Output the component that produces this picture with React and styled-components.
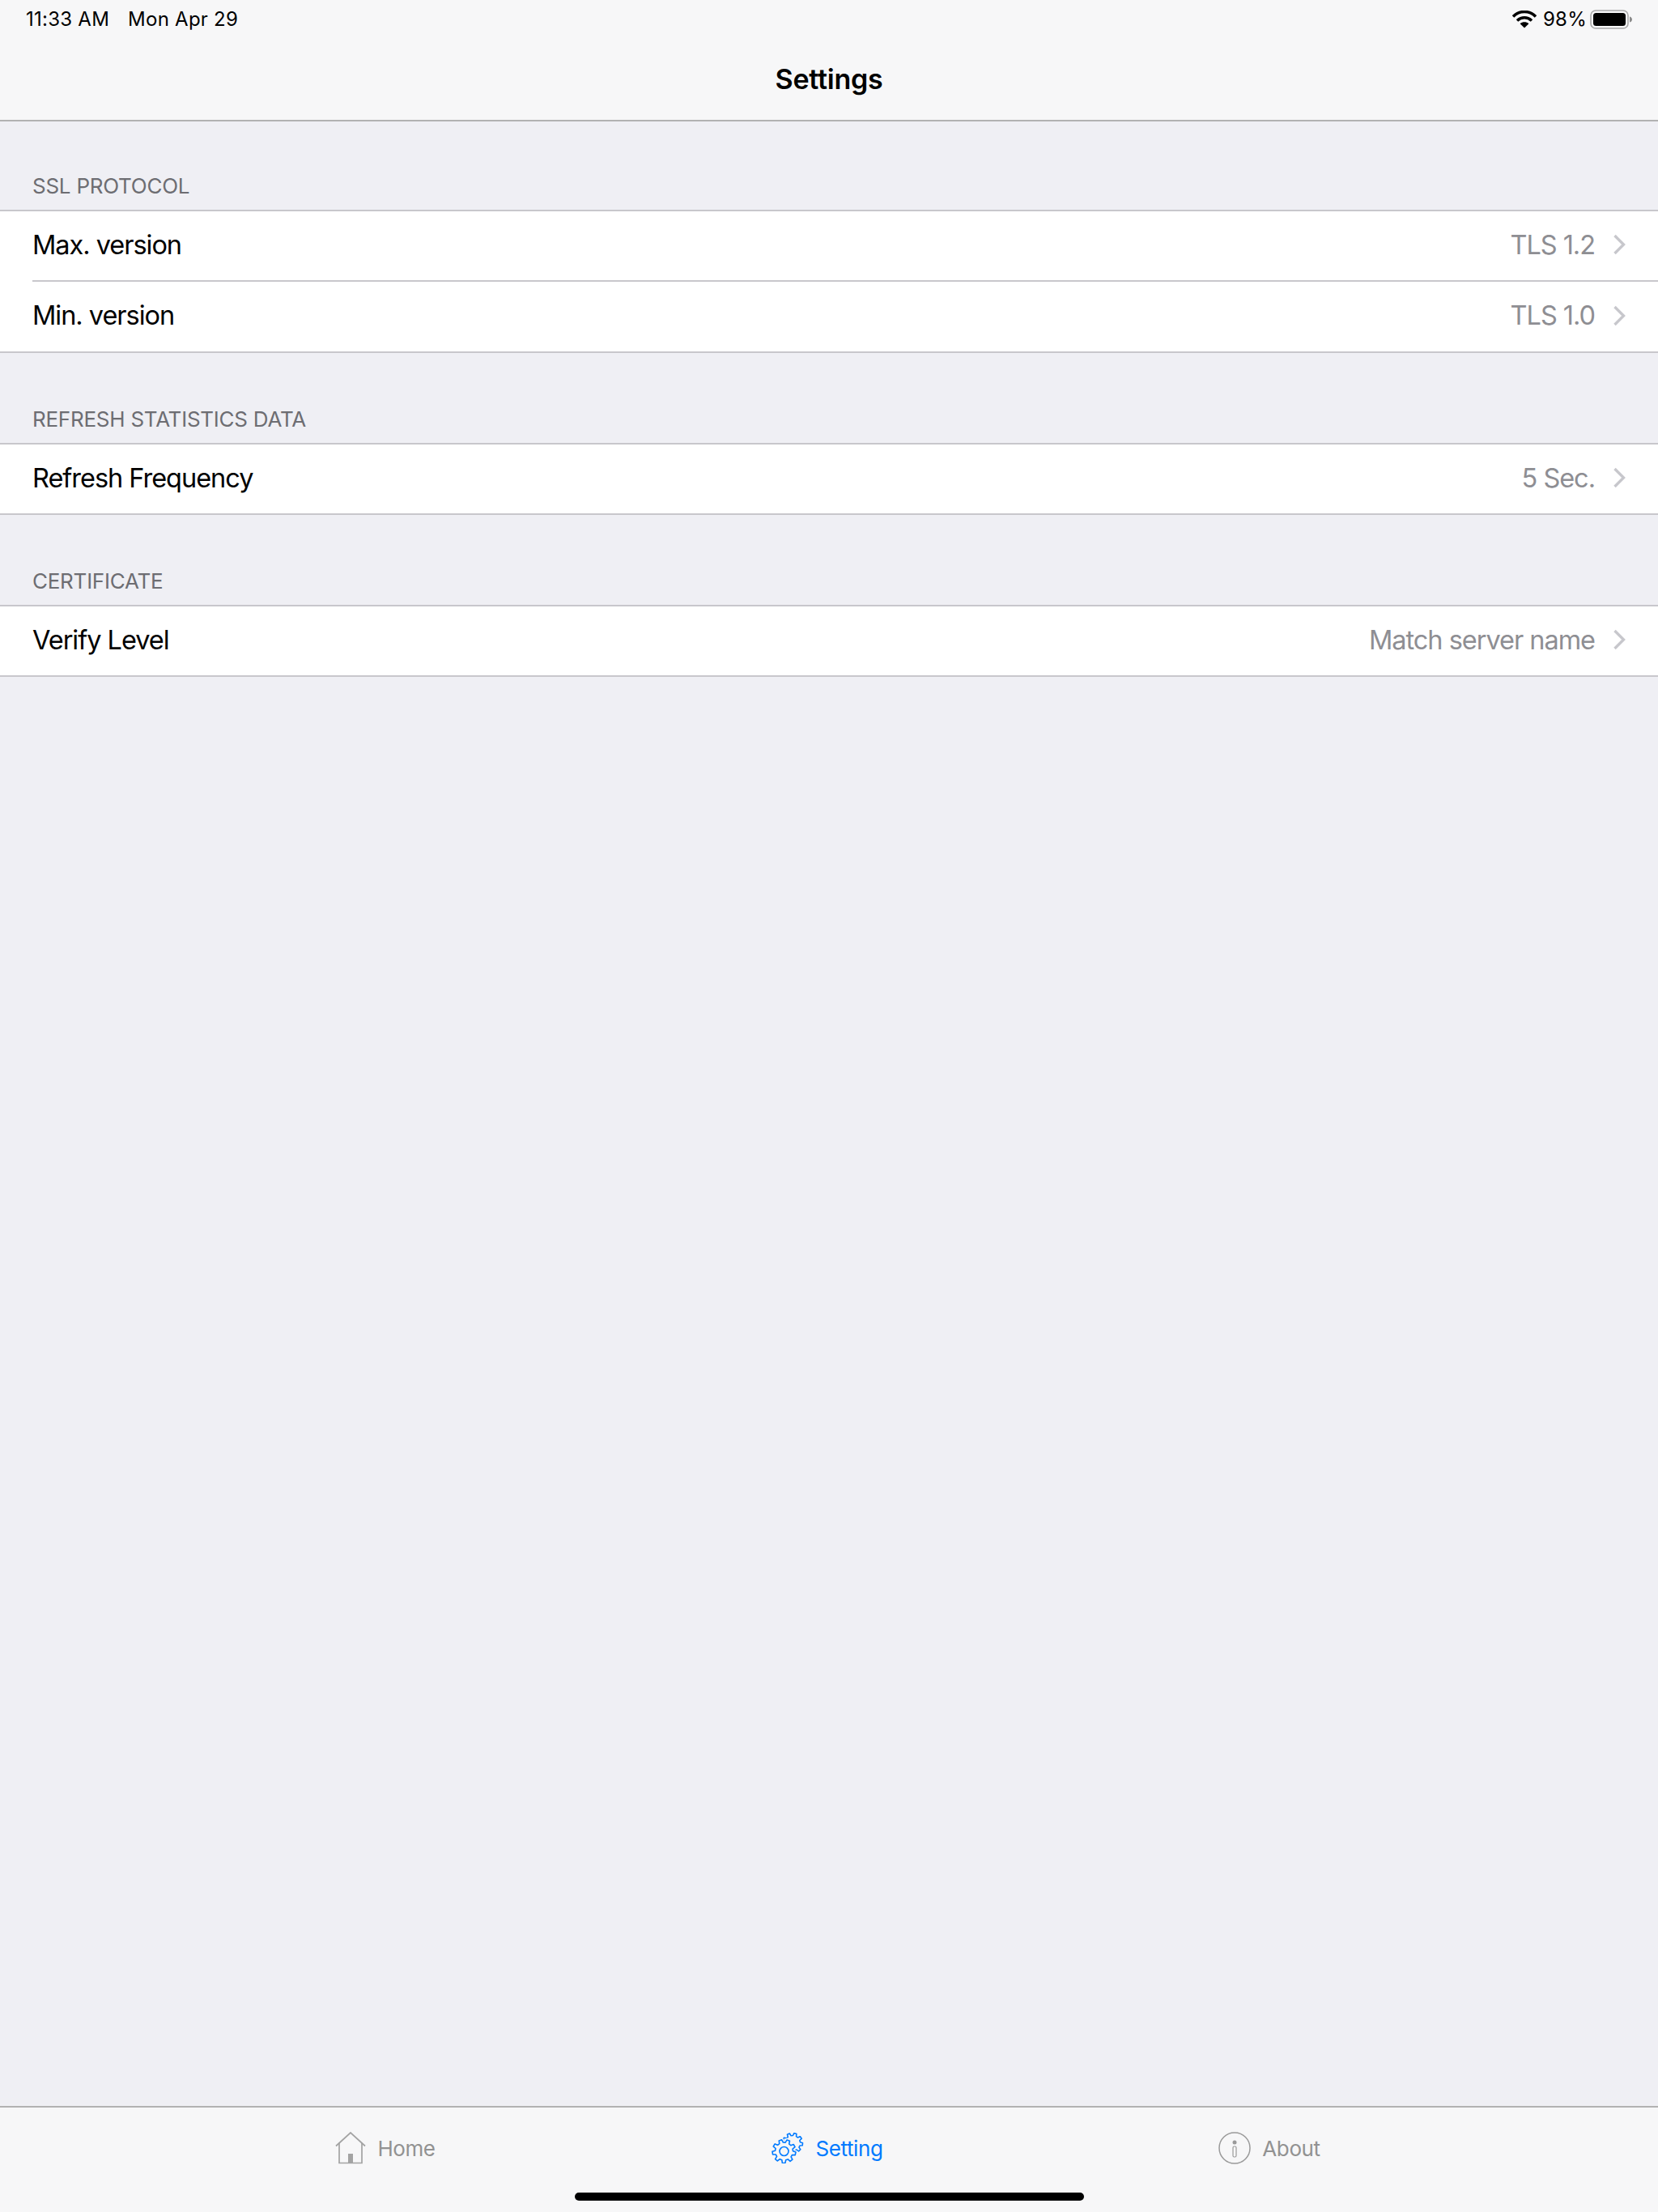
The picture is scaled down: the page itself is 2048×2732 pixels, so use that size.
import React from "react";
import styled, { createGlobalStyle } from "styled-components";

const Global = createGlobalStyle`
  html, body { margin: 0; padding: 0; background: #efeff4; }
  body { font-family: Inter, "Liberation Sans", sans-serif; }
`;

const Page = styled.div`
  width: 2048px;
  height: 2732px;
  display: flex;
  flex-direction: column;
  background: #efeff4;
  overflow: hidden;
`;

const NavBar = styled.header`
  height: 150px;
  box-sizing: border-box;
  background: #f7f7f8;
  border-bottom: 2px solid #b2b2b2;
  display: flex;
  flex-direction: column;
`;

const StatusBar = styled.div`
  height: 47px;
  padding: 0 32px;
  display: flex;
  align-items: center;
  justify-content: space-between;
  font-size: 24px;
  letter-spacing: 0.25px;
  color: #000;
`;

const StatusLeft = styled.div`
  display: flex;
  gap: 23px;
`;

const StatusRight = styled.div`
  display: flex;
  align-items: center;
  gap: 8px;
`;

const BatteryWrap = styled.span`
  display: flex;
  margin-left: -4px;
`;

const Title = styled.h1`
  margin: 0;
  height: 100px;
  display: flex;
  align-items: center;
  justify-content: center;
  font-size: 34px;
  font-weight: 600;
  letter-spacing: -0.25px;
  color: #000;
`;

const Content = styled.main`
  flex: 1;
  display: flex;
  flex-direction: column;
`;

const SectionHeader = styled.div`
  height: ${(p) => (p.$first ? 109 : 111)}px;
  box-sizing: border-box;
  padding: 0 40px 13px;
  display: flex;
  align-items: flex-end;
  font-size: 26px;
  letter-spacing: -0.25px;
  color: #6d6d72;
  line-height: 32px;
`;

const Group = styled.section`
  background: #fff;
  border-top: 2px solid #c8c7cc;
  border-bottom: 2px solid #c8c7cc;
`;

const Row = styled.div`
  height: ${(p) => (p.$first ? 85 : 88)}px;
  margin-left: 40px;
  padding: 0 40px 3px 0;
  box-sizing: border-box;
  display: flex;
  align-items: center;
  justify-content: space-between;
  font-size: 32.5px;
  letter-spacing: -1.03px;
  color: #000;
  border-top: ${(p) => (p.$first ? "none" : "2px solid #c8c7cc")};
`;

const Value = styled.div`
  display: flex;
  align-items: center;
  gap: 20px;
  color: #8e8e93;
`;

const TabBar = styled.footer`
  height: 131px;
  box-sizing: border-box;
  background: #f7f7f8;
  border-top: 2px solid #b2b2b2;
  position: relative;
  display: flex;
  justify-content: center;
  padding-top: 28px;
`;

const Tab = styled.div`
  width: 546px;
  height: 44px;
  box-sizing: border-box;
  padding-right: 4px;
  display: flex;
  align-items: center;
  justify-content: center;
  gap: 14px;
  font-size: 26px;
  letter-spacing: -0.4px;
  color: ${(p) => (p.$active ? "#007aff" : "#929292")};
`;

const HomeIndicator = styled.div`
  position: absolute;
  left: 710px;
  bottom: 14px;
  width: 629px;
  height: 10px;
  border-radius: 5px;
  background: #000;
`;

const Wifi = () => (
  <svg width="30" height="22" viewBox="0 0 30 22">
    <path d="M1 7.500C9-.5 21-.5 29 7.500" fill="none" stroke="#000" strokeWidth="3.600" />
    <path d="M6 12.500c5.500-5 12.500-5 18 0" fill="none" stroke="#000" strokeWidth="3.600" />
    <path d="M15 21.500 9.600 16.200c3.200-2.600 7.600-2.600 10.800 0z" fill="#000" />
  </svg>
);

const Battery = () => (
  <svg width="52" height="24" viewBox="0 0 52 24">
    <rect x="1" y="1" width="46" height="22" rx="6" fill="none" stroke="#a8a8a8" strokeWidth="1.600" />
    <rect x="4" y="4" width="40" height="16" rx="3.500" fill="#000" />
    <path d="M49 8.500c2 .5 3 2 3 3.500s-1 3-3 3.500z" fill="#8a8a8a" />
  </svg>
);

const Chevron = () => (
  <svg width="18" height="26" viewBox="0 0 18 26">
    <path d="M4.500 2 15.500 13 4.500 24" fill="none" stroke="#c7c7cc" strokeWidth="3.400" />
  </svg>
);

const HomeIcon = () => (
  <svg width="38" height="40" viewBox="0 0 38 40" fill="none" stroke="#a3a3a3">
    <path d="M1 17.500 19 1l18 16.500" strokeWidth="1.700" />
    <path d="M5 13.500V38.500H33V13.500" strokeWidth="1.700" />
    <rect x="16" y="27" width="6" height="11.500" fill="#a3a3a3" stroke="none" />
  </svg>
);

const gearPath = (cx, cy, outer, inner, teeth, phase = 0) => {
  const pts = [];
  const step = (Math.PI * 2) / teeth;
  for (let i = 0; i < teeth; i++) {
    const a = i * step + phase;
    const at = (r, d) =>
      [(cx + r * Math.cos(a + d)).toFixed(2), (cy + r * Math.sin(a + d)).toFixed(2)].join(" ");
    pts.push(at(inner, -step * 0.32), at(outer, -step * 0.18), at(outer, step * 0.18), at(inner, step * 0.32));
  }
  return `M${pts.join("L")}Z`;
};

const GearIcon = () => {
  const front = gearPath(15.5, 23, 14.5, 11, 9, 0.2);
  return (
    <svg width="40" height="38" viewBox="0 0 40 38" fill="none" stroke="#007aff" strokeWidth="1.600" strokeLinejoin="round">
      <path d={gearPath(26, 13, 12.5, 9.500, 9, 0.1)} />
      <path d={front} fill="#f7f7f8" stroke="#f7f7f8" strokeWidth="4.500" />
      <path d={front} />
      <circle cx="15.500" cy="23" r="5.500" />
    </svg>
  );
};

const InfoIcon = () => (
  <svg width="40" height="40" viewBox="0 0 40 40" fill="none" stroke="#9a9a9a">
    <circle cx="20" cy="20" r="19" strokeWidth="1.500" />
    <circle cx="20" cy="13" r="2.500" fill="#9a9a9a" stroke="none" />
    <rect x="18" y="18" width="4" height="13" rx="1.500" strokeWidth="1.200" />
  </svg>
);

const sections = [
  {
    title: "SSL PROTOCOL",
    rows: [
      ["Max. version", "TLS 1.2"],
      ["Min. version", "TLS 1.0"],
    ],
  },
  { title: "REFRESH STATISTICS DATA", rows: [["Refresh Frequency", "5 Sec."]] },
  { title: "CERTIFICATE", rows: [["Verify Level", "Match server name"]] },
];

export default function App() {
  return (
    <Page>
      <Global />
      <NavBar>
        <StatusBar>
          <StatusLeft>
            <span>11:33 AM</span>
            <span>Mon Apr 29</span>
          </StatusLeft>
          <StatusRight>
            <Wifi />
            <span>98%</span>
            <BatteryWrap>
              <Battery />
            </BatteryWrap>
          </StatusRight>
        </StatusBar>
        <Title>Settings</Title>
      </NavBar>
      <Content>
        {sections.map((s, n) => (
          <React.Fragment key={s.title}>
            <SectionHeader $first={n === 0}>{s.title}</SectionHeader>
            <Group>
              {s.rows.map(([label, value], i) => (
                <Row key={label} $first={i === 0}>
                  <span>{label}</span>
                  <Value>
                    {value}
                    <Chevron />
                  </Value>
                </Row>
              ))}
            </Group>
          </React.Fragment>
        ))}
      </Content>
      <TabBar>
        <Tab>
          <HomeIcon />
          Home
        </Tab>
        <Tab $active>
          <GearIcon />
          Setting
        </Tab>
        <Tab>
          <InfoIcon />
          About
        </Tab>
        <HomeIndicator />
      </TabBar>
    </Page>
  );
}
